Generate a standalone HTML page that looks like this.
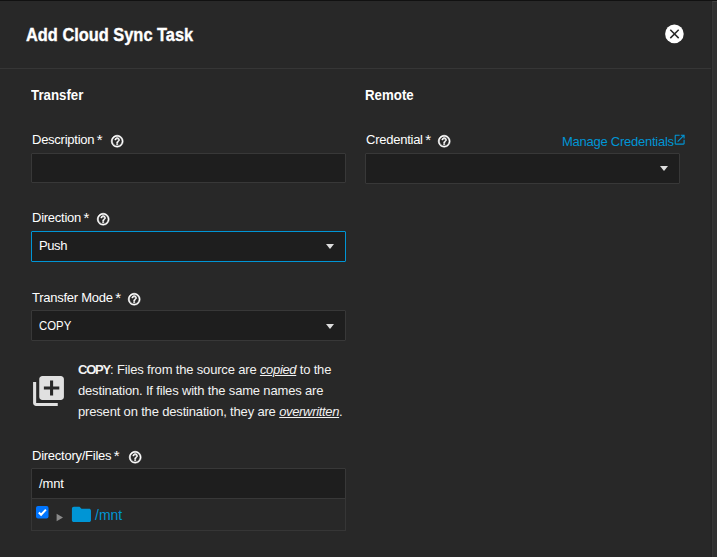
<!DOCTYPE html>
<html><head><meta charset="utf-8">
<style>
*{box-sizing:border-box;margin:0;padding:0}
html,body{width:717px;height:557px;overflow:hidden;background:#282828;font-family:"Liberation Sans",sans-serif;color:#fff}
.abs{position:absolute}
#topline{left:0;top:0;width:717px;height:1px;background:#111}
#sep{left:0;top:68px;width:711px;height:1px;background:#363636}
#track{left:711px;top:1px;width:6px;height:556px;background:#303030;border-left:1px solid #252525}
#track2{left:712px;top:1px;width:5px;height:556px;border-left:1px solid #363636;border-top:1px solid #404040}
.title{left:26px;top:25px;font-size:18px;font-weight:bold;white-space:nowrap;transform-origin:0 0;transform:scaleX(0.91);-webkit-text-stroke:0.35px #fff}
.h{font-size:15px;font-weight:bold;white-space:nowrap;transform-origin:0 0;transform:scaleX(0.885)}
.lbl{font-size:13px;white-space:nowrap;color:#fff;letter-spacing:-0.25px}
.lbl span{margin-left:2.4px;font-size:15px;line-height:0;position:relative;top:1px}
.help{width:14.4px;height:14.4px}
.box{background:#1e1e1e;border:1px solid #383838;border-radius:1px}
.txt{font-size:13px;white-space:nowrap}
.caret{width:0;height:0;border-left:4.8px solid transparent;border-right:4.8px solid transparent;border-top:5px solid #ddd}
.info{font-size:13px;line-height:21px;color:#f2f2f2;letter-spacing:-0.17px}
.info b{letter-spacing:-1.2px}
.info i{letter-spacing:-0.33px}
.link{color:#0095d5;font-size:13px;white-space:nowrap;letter-spacing:-0.25px}
</style></head>
<body>
<svg width="0" height="0" style="position:absolute">
<defs>
<symbol id="hp" viewBox="0 0 24 24"><path fill="#fff" stroke="#fff" stroke-width="0.9" d="M11 18h2v-2h-2v2zm1-16C6.48 2 2 6.48 2 12s4.48 10 10 10 10-4.48 10-10S17.52 2 12 2zm0 18c-4.41 0-8-3.59-8-8s3.59-8 8-8 8 3.59 8 8-3.59 8-8 8zm0-14c-2.21 0-4 1.79-4 4h2c0-1.1.9-2 2-2s2 .9 2 2c0 2-3 1.75-3 5h2c0-2.25 3-2.5 3-5 0-2.21-1.79-4-4-4z"/></symbol>
</defs>
</svg>
<div class="abs" id="topline"></div>
<div class="abs" id="sep"></div>
<div class="abs" id="track"></div><div class="abs" id="track2"></div>

<div class="abs title">Add Cloud Sync Task</div>
<svg class="abs" style="left:664px;top:24px" width="20" height="20" viewBox="0 0 20 20">
<circle cx="10.4" cy="9.9" r="9.3" fill="#fff"/>
<path d="M6.3 5.8L14.7 14.1M14.7 5.8L6.3 14.1" stroke="#282828" stroke-width="1.5"/>
</svg>

<div class="abs h" style="left:30.5px;top:86px">Transfer</div>
<div class="abs h" style="left:365px;top:86px">Remote</div>

<div class="abs lbl" style="left:32px;top:132px">Description<span>*</span></div>
<svg class="abs help" style="left:109.5px;top:133.6px"><use href="#hp"/></svg>
<div class="abs box" style="left:31px;top:153px;width:315px;height:30px"></div>

<div class="abs lbl" style="left:32px;top:210px">Direction<span>*</span></div>
<svg class="abs help" style="left:95.5px;top:211.6px"><use href="#hp"/></svg>
<div class="abs box" style="left:31px;top:231px;width:315px;height:31px;border-color:#0095d5"></div>
<div class="abs txt" style="left:39px;top:238px;letter-spacing:-0.4px">Push</div>
<div class="abs caret" style="left:326px;top:244px"></div>

<div class="abs lbl" style="left:32px;top:290px">Transfer Mode<span>*</span></div>
<svg class="abs help" style="left:126.8px;top:291.6px"><use href="#hp"/></svg>
<div class="abs box" style="left:31px;top:310px;width:315px;height:31px"></div>
<div class="abs txt" style="left:39px;top:318px;transform-origin:0 0;transform:scaleX(0.875)">COPY</div>
<div class="abs caret" style="left:326px;top:324px"></div>

<svg class="abs" style="left:30.4px;top:373px" width="37" height="36" viewBox="0 0 24 24" preserveAspectRatio="none"><path fill="#e0e0e0" d="M4 6H2v14c0 1.1.9 2 2 2h14v-2H4V6zm16-4H8c-1.1 0-2 .9-2 2v12c0 1.1.9 2 2 2h12c1.1 0 2-.9 2-2V4c0-1.100-.9-2-2-2zm-1 9h-4v4h-2v-4H9V9h4V5h2v4h4v2z"/></svg>
<div class="abs info" style="left:78px;top:359px;width:280px"><b>COPY</b>: Files from the source are <i><u>copied</u></i> to the destination. If files with the same names are present on the destination, they are <i><u>overwritten</u></i>.</div>

<div class="abs lbl" style="left:32px;top:448px">Directory/Files<span>*</span></div>
<svg class="abs help" style="left:127.5px;top:449.6px"><use href="#hp"/></svg>
<div class="abs box" style="left:31px;top:468px;width:315px;height:31px;border-radius:1px 1px 0 0"></div>
<div class="abs txt" style="left:39px;top:476px;letter-spacing:-0.15px">/mnt</div>
<div class="abs" style="left:31px;top:498px;width:315px;height:33px;border:1px solid #363636;border-top:none"></div>
<svg class="abs" style="left:36px;top:506px" width="12.5" height="12.5" viewBox="0 0 12.5 12.5"><rect x="0" y="0" width="12.5" height="12.5" rx="2" fill="#0075ff"/><path d="M2.8 6.5L5.1 8.8L9.9 3.6" stroke="#fff" stroke-width="2" fill="none"/></svg>
<svg class="abs" style="left:56.4px;top:513px" width="8" height="9" viewBox="0 0 8 9"><path d="M0.6 0.8L7 4.5L0.6 8.2z" fill="#8a8a8a"/></svg>
<svg class="abs" style="left:69.7px;top:503px" width="22.9" height="22.9" viewBox="0 0 24 24"><path fill="#0095d5" d="M10 4H4c-1.1 0-1.99.9-1.99 2L2 18c0 1.1.9 2 2 2h16c1.1 0 2-.9 2-2V8c0-1.1-.9-2-2-2h-8l-2-2z"/></svg>
<div class="abs link" style="left:95px;top:506.5px;font-size:14px;letter-spacing:0">/mnt</div>

<div class="abs lbl" style="left:366px;top:132px">Credential<span>*</span></div>
<svg class="abs help" style="left:436.5px;top:133.6px"><use href="#hp"/></svg>
<div class="abs link" style="left:562px;top:134px">Manage Credentials</div>
<svg class="abs" style="left:673.1px;top:133.1px" width="13.3" height="13.3" viewBox="0 0 24 24"><path fill="#0095d5" d="M19 19H5V5h7V3H5c-1.11 0-2 .9-2 2v14c0 1.1.89 2 2 2h14c1.1 0 2-.9 2-2v-7h-2v7zM14 3v2h3.59l-9.83 9.830 1.41 1.41L19 6.41V10h2V3h-7z"/></svg>
<div class="abs box" style="left:365px;top:153px;width:315px;height:31px"></div>
<div class="abs caret" style="left:660px;top:166px"></div>

</body></html>
